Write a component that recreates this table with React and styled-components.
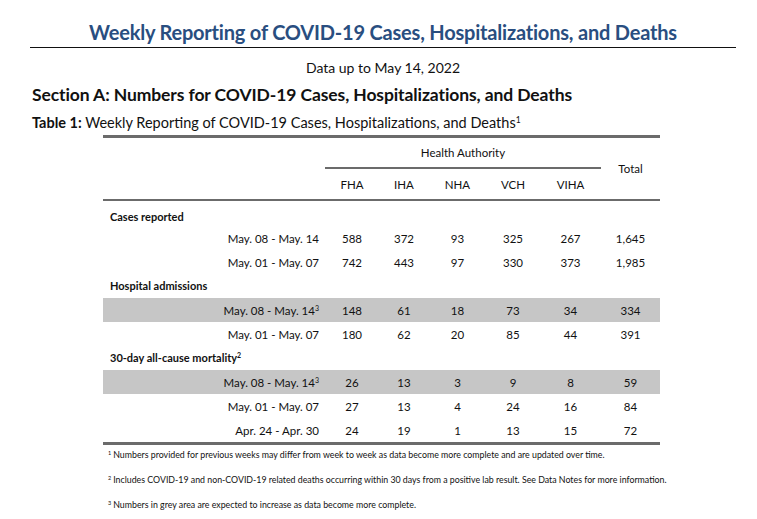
import React from "react";
import styled, { createGlobalStyle } from "styled-components";

const Global = createGlobalStyle`
  html, body { margin: 0; padding: 0; background: #fff; }
  body { font-family: "Lato", "Open Sans", sans-serif; color: #111; }
`;

const Page = styled.div`
  width: 706px;
  padding: 0 21px 0 30px;
  display: flex;
  flex-direction: column;
`;

const Title = styled.h1`
  margin: 0;
  padding-top: 20px;
  padding-bottom: 2px;
  font-size: 20px;
  font-weight: 700;
  color: #294e80;
  text-align: center;
  line-height: 25px;
  border-bottom: 1.5px solid #111;
  letter-spacing: -0.2px;
`;

const Subtitle = styled.div`
  margin-top: 11px;
  text-align: center;
  font-size: 14px;
  line-height: 18px;
  color: #111;
`;

const SectionTitle = styled.h2`
  margin: 8px 0 0 2px;
  font-size: 17.5px;
  font-weight: 700;
  line-height: 20px;
  letter-spacing: -0.1px;
  color: #111;
`;

const Caption = styled.div`
  margin: 9px 0 0 2px;
  font-size: 14.5px;
  line-height: 18px;
  color: #111;
  b { font-weight: 700; }
  sup { font-size: 8.5px; vertical-align: 5px; line-height: 0; }
`;

const Table = styled.table`
  margin: 3px 0 0 73px;
  width: 557px;
  table-layout: fixed;
  border-collapse: collapse;
  border-top: 3px solid #6b6b6b;
  border-bottom: 3px solid #6b6b6b;
  font-size: 11.5px;
  color: #111;
`;

const HeadCell = styled.th`
  font-weight: 400;
  text-align: center;
  padding: 0;
  height: ${(p) => p.$h}px;
  border-bottom: ${(p) => (p.$line ? "2px solid #6b6b6b" : "none")};
  vertical-align: middle;
`;

const HeadRow = styled.tr`
  border-bottom: ${(p) => (p.$last ? "2px solid #6b6b6b" : "none")};
`;

const SectionCell = styled.td`
  padding: ${(p) => (p.$first ? "9px 0 0 7px" : "0 0 0 7px")};
  height: ${(p) => (p.$first ? 16 : 24)}px;
  font-weight: 700;
  font-size: 11px;
  text-align: left;
  vertical-align: ${(p) => (p.$first ? "top" : "middle")};
  line-height: 14px;
  sup { font-size: 7px; vertical-align: 4px; line-height: 0; }
`;

const DataRow = styled.tr`
  background: ${(p) => (p.$grey ? "#c6c6c6" : "transparent")};
`;

const LabelCell = styled.td`
  height: 24px;
  padding: 0 6px 0 0;
  text-align: right;
  white-space: nowrap;
  sup { font-size: 7px; vertical-align: 4px; line-height: 0; }
`;

const NumCell = styled.td`
  height: 24px;
  padding: 0;
  text-align: center;
`;

const Notes = styled.div`
  margin: 4px 0 0 78px;
  display: flex;
  flex-direction: column;
  gap: 14px;
  font-size: 8.8px;
  line-height: 11px;
  color: #111;
  white-space: nowrap;
  sup { font-size: 5.5px; vertical-align: 3px; line-height: 0; margin-right: 2px; }
`;

const cols = ["FHA", "IHA", "NHA", "VCH", "VIHA"];
const widths = [222, 54, 50, 57, 54, 61, 59];

const sections = [
  {
    title: "Cases reported",
    rows: [
      { label: "May. 08 - May. 14", v: ["588", "372", "93", "325", "267", "1,645"] },
      { label: "May. 01 - May. 07", v: ["742", "443", "97", "330", "373", "1,985"] },
    ],
  },
  {
    title: "Hospital admissions",
    rows: [
      { label: "May. 08 - May. 14", sup: "3", grey: true, v: ["148", "61", "18", "73", "34", "334"] },
      { label: "May. 01 - May. 07", v: ["180", "62", "20", "85", "44", "391"] },
    ],
  },
  {
    title: "30-day all-cause mortality",
    sup: "2",
    rows: [
      { label: "May. 08 - May. 14", sup: "3", grey: true, v: ["26", "13", "3", "9", "8", "59"] },
      { label: "May. 01 - May. 07", v: ["27", "13", "4", "24", "16", "84"] },
      { label: "Apr. 24 - Apr. 30", v: ["24", "19", "1", "13", "15", "72"] },
    ],
  },
];

export default function App() {
  return (
    <>
      <Global />
      <Page>
        <Title>Weekly Reporting of COVID-19 Cases, Hospitalizations, and Deaths</Title>
        <Subtitle>Data up to May 14, 2022</Subtitle>
        <SectionTitle>Section A: Numbers for COVID-19 Cases, Hospitalizations, and Deaths</SectionTitle>
        <Caption>
          <b>Table 1:</b> Weekly Reporting of COVID-19 Cases, Hospitalizations, and Deaths<sup>1</sup>
        </Caption>
        <Table>
          <colgroup>
            {widths.map((w, i) => (
              <col key={i} style={{ width: w }} />
            ))}
          </colgroup>
          <thead>
            <HeadRow>
              <HeadCell $h={29} />
              <HeadCell $h={29} colSpan={5} $line>
                Health Authority
              </HeadCell>
              <HeadCell $h={29} rowSpan={2}>
                Total
              </HeadCell>
            </HeadRow>
            <HeadRow $last>
              <HeadCell $h={30} />
              {cols.map((c) => (
                <HeadCell key={c} $h={30}>
                  {c}
                </HeadCell>
              ))}
            </HeadRow>
          </thead>
          <tbody>
            {sections.map((s, si) => (
              <React.Fragment key={s.title}>
                <tr>
                  <SectionCell $first={si === 0} colSpan={7}>
                    {s.title}
                    {s.sup && <sup>{s.sup}</sup>}
                  </SectionCell>
                </tr>
                {s.rows.map((r, ri) => (
                  <DataRow key={ri} $grey={r.grey}>
                    <LabelCell>
                      {r.label}
                      {r.sup && <sup>{r.sup}</sup>}
                    </LabelCell>
                    {r.v.map((v, vi) => (
                      <NumCell key={vi}>{v}</NumCell>
                    ))}
                  </DataRow>
                ))}
              </React.Fragment>
            ))}
          </tbody>
        </Table>
        <Notes>
          <div>
            <sup>1</sup>Numbers provided for previous weeks may differ from week to week as data become more complete and are updated over time.
          </div>
          <div>
            <sup>2</sup>Includes COVID-19 and non-COVID-19 related deaths occurring within 30 days from a positive lab result. See Data Notes for more information.
          </div>
          <div>
            <sup>3</sup>Numbers in grey area are expected to increase as data become more complete.
          </div>
        </Notes>
      </Page>
    </>
  );
}
